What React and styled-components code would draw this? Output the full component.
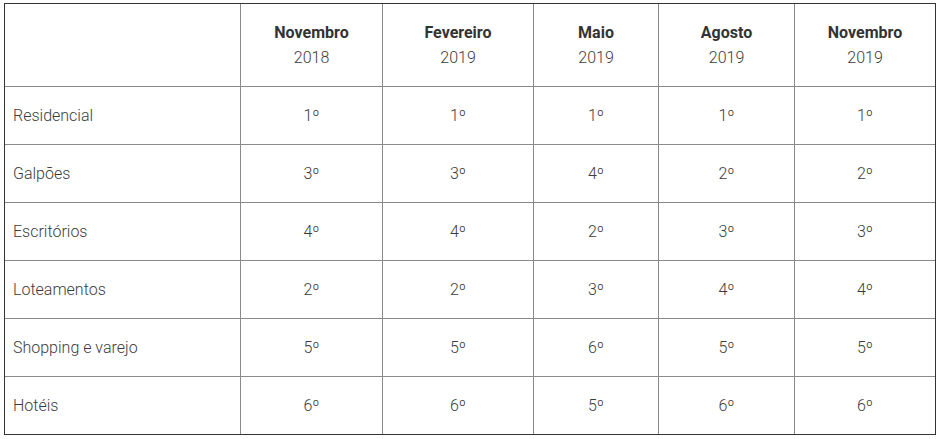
import React from 'react';
import styled, { createGlobalStyle } from 'styled-components';

const GlobalStyle = createGlobalStyle`
  body {
    margin: 0;
    background: #ffffff;
    font-family: Roboto, "Liberation Sans", sans-serif;
  }
`;

const Wrapper = styled.div`
  padding: 3px 4px;
`;

const Table = styled.table`
  border-collapse: separate;
  border-spacing: 0;
  border: 1px solid #333333;
  table-layout: fixed;
  width: 931px;
  color: #3c3c3c;
  font-size: 16px;
  font-weight: 300;
`;

const HeadCell = styled.th`
  height: 82px;
  padding: 0 8px;
  border-left: 1px solid #8a8a8a;
  text-align: center;
  font-weight: 300;
  line-height: 25px;
  &:first-child {
    border-left: none;
  }
`;

const Month = styled.div`
  font-weight: 700;
  color: #333333;
`;

const Cell = styled.td`
  height: 57px;
  padding: 0 8px;
  border-top: 1px solid #8a8a8a;
  border-left: 1px solid #8a8a8a;
  text-align: ${(p) => (p.$label ? 'left' : 'center')};
  &:first-child {
    border-left: none;
  }
`;

const columns = [
  { month: 'Novembro', year: '2018', width: 142 },
  { month: 'Fevereiro', year: '2019', width: 151 },
  { month: 'Maio', year: '2019', width: 125 },
  { month: 'Agosto', year: '2019', width: 136 },
  { month: 'Novembro', year: '2019', width: 141 },
];

const rows = [
  ['Residencial', '1º', '1º', '1º', '1º', '1º'],
  ['Galpões', '3º', '3º', '4º', '2º', '2º'],
  ['Escritórios', '4º', '4º', '2º', '3º', '3º'],
  ['Loteamentos', '2º', '2º', '3º', '4º', '4º'],
  ['Shopping e varejo', '5º', '5º', '6º', '5º', '5º'],
  ['Hotéis', '6º', '6º', '5º', '6º', '6º'],
];

export default function App() {
  return (
    <Wrapper>
      <GlobalStyle />
      <Table>
        <colgroup>
          <col style={{ width: 235 }} />
          {columns.map((c, i) => (
            <col key={i} style={{ width: c.width }} />
          ))}
        </colgroup>
        <thead>
          <tr>
            <HeadCell />
            {columns.map((c, i) => (
              <HeadCell key={i}>
                <Month>{c.month}</Month>
                <div>{c.year}</div>
              </HeadCell>
            ))}
          </tr>
        </thead>
        <tbody>
          {rows.map((r) => (
            <tr key={r[0]}>
              {r.map((v, i) => (
                <Cell key={i} $label={i === 0}>
                  {v}
                </Cell>
              ))}
            </tr>
          ))}
        </tbody>
      </Table>
    </Wrapper>
  );
}
